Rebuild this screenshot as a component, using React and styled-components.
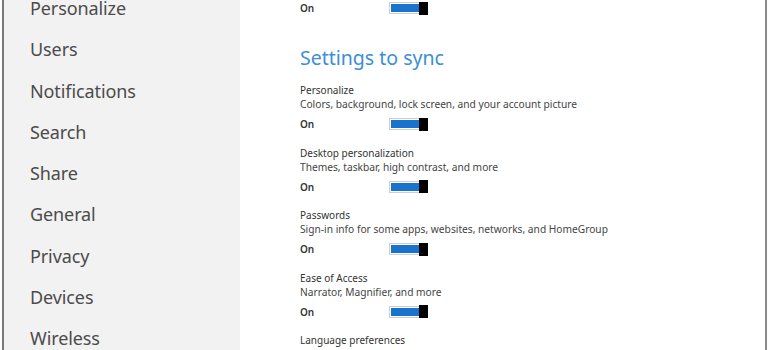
import React from "react";
import styled, { createGlobalStyle } from "styled-components";

const GlobalStyle = createGlobalStyle`
  html, body {
    margin: 0;
    padding: 0;
    background: #fff;
  }
  body {
    font-family: "Noto Sans", "Open Sans", sans-serif;
  }
`;

const Frame = styled.div`
  width: 768px;
  height: 350px;
  display: flex;
  overflow: hidden;
  background: #fff;
  box-sizing: border-box;
  padding-left: 2px;
  padding-right: 1px;
`;

const Sidebar = styled.nav`
  width: 238px;
  flex-shrink: 0;
  background: #f2f2f2;
  border-left: 2px solid #7a7a7a;
  box-sizing: border-box;
  overflow: hidden;
`;

const NavList = styled.ul`
  list-style: none;
  margin: -4px 0 0 0;
  padding: 0 0 0 26px;
  display: flex;
  flex-direction: column;
  gap: 17.25px;
`;

const NavItem = styled.li`
  font-size: 18px;
  line-height: 24px;
  color: #4b4b4b;
  letter-spacing: -0.1px;
`;

const Content = styled.main`
  flex: 1;
  overflow: hidden;
  border-right: 2px solid #8a8a8a;
  padding-left: 60px;
`;

const Scroll = styled.div`
  margin-top: 0;
  display: flex;
  flex-direction: column;
`;

const OnRow = styled.div`
  display: flex;
  align-items: center;
  height: 16px;
  margin-bottom: ${(p) => p.$after || 0}px;
`;

const OnText = styled.span`
  width: 89px;
  font-size: 10px;
  font-weight: 600;
  color: #333;
`;

const Toggle = styled.span`
  display: flex;
  align-items: center;
  width: 39px;
  height: 12px;
  border: 1px solid #cfcfcf;
  box-sizing: border-box;
  background: #fff;
`;

const Track = styled.span`
  flex: 1;
  height: 8px;
  margin-left: 1px;
  background: #1873cf;
`;

const Thumb = styled.span`
  width: 9px;
  height: 13px;
  background: #000;
  margin-right: -1px;
`;

const Heading = styled.h2`
  margin: 0 0 12px 0;
  font-size: 19.5px;
  font-weight: 400;
  color: #3b8ed8;
  line-height: 26px;
`;

const Group = styled.section`
  display: flex;
  flex-direction: column;
  margin-bottom: 13.5px;
`;

const Label = styled.div`
  font-size: 10px;
  line-height: 14px;
  color: #333;
`;

const Desc = styled.div`
  font-size: 10.2px;
  line-height: 14px;
  color: #444;
  margin-bottom: 5px;
`;

const Switch = () => (
  <Toggle>
    <Track />
    <Thumb />
  </Toggle>
);

const navItems = [
  "Personalize",
  "Users",
  "Notifications",
  "Search",
  "Share",
  "General",
  "Privacy",
  "Devices",
  "Wireless",
];

const groups = [
  ["Personalize", "Colors, background, lock screen, and your account picture"],
  ["Desktop personalization", "Themes, taskbar, high contrast, and more"],
  ["Passwords", "Sign-in info for some apps, websites, networks, and HomeGroup"],
  ["Ease of Access", "Narrator, Magnifier, and more"],
  ["Language preferences", "Keyboards, other input methods, display language, and more"],
];

export default function App() {
  return (
    <>
      <GlobalStyle />
      <Frame>
        <Sidebar>
          <NavList>
            {navItems.map((n) => (
              <NavItem key={n}>{n}</NavItem>
            ))}
          </NavList>
        </Sidebar>
        <Content>
          <Scroll>
            <OnRow $after={29}>
              <OnText>On</OnText>
              <Switch />
            </OnRow>
            <Heading>Settings to sync</Heading>
            {groups.map(([l, d]) => (
              <Group key={l}>
                <Label>{l}</Label>
                <Desc>{d}</Desc>
                <OnRow>
                  <OnText>On</OnText>
                  <Switch />
                </OnRow>
              </Group>
            ))}
          </Scroll>
        </Content>
      </Frame>
    </>
  );
}
